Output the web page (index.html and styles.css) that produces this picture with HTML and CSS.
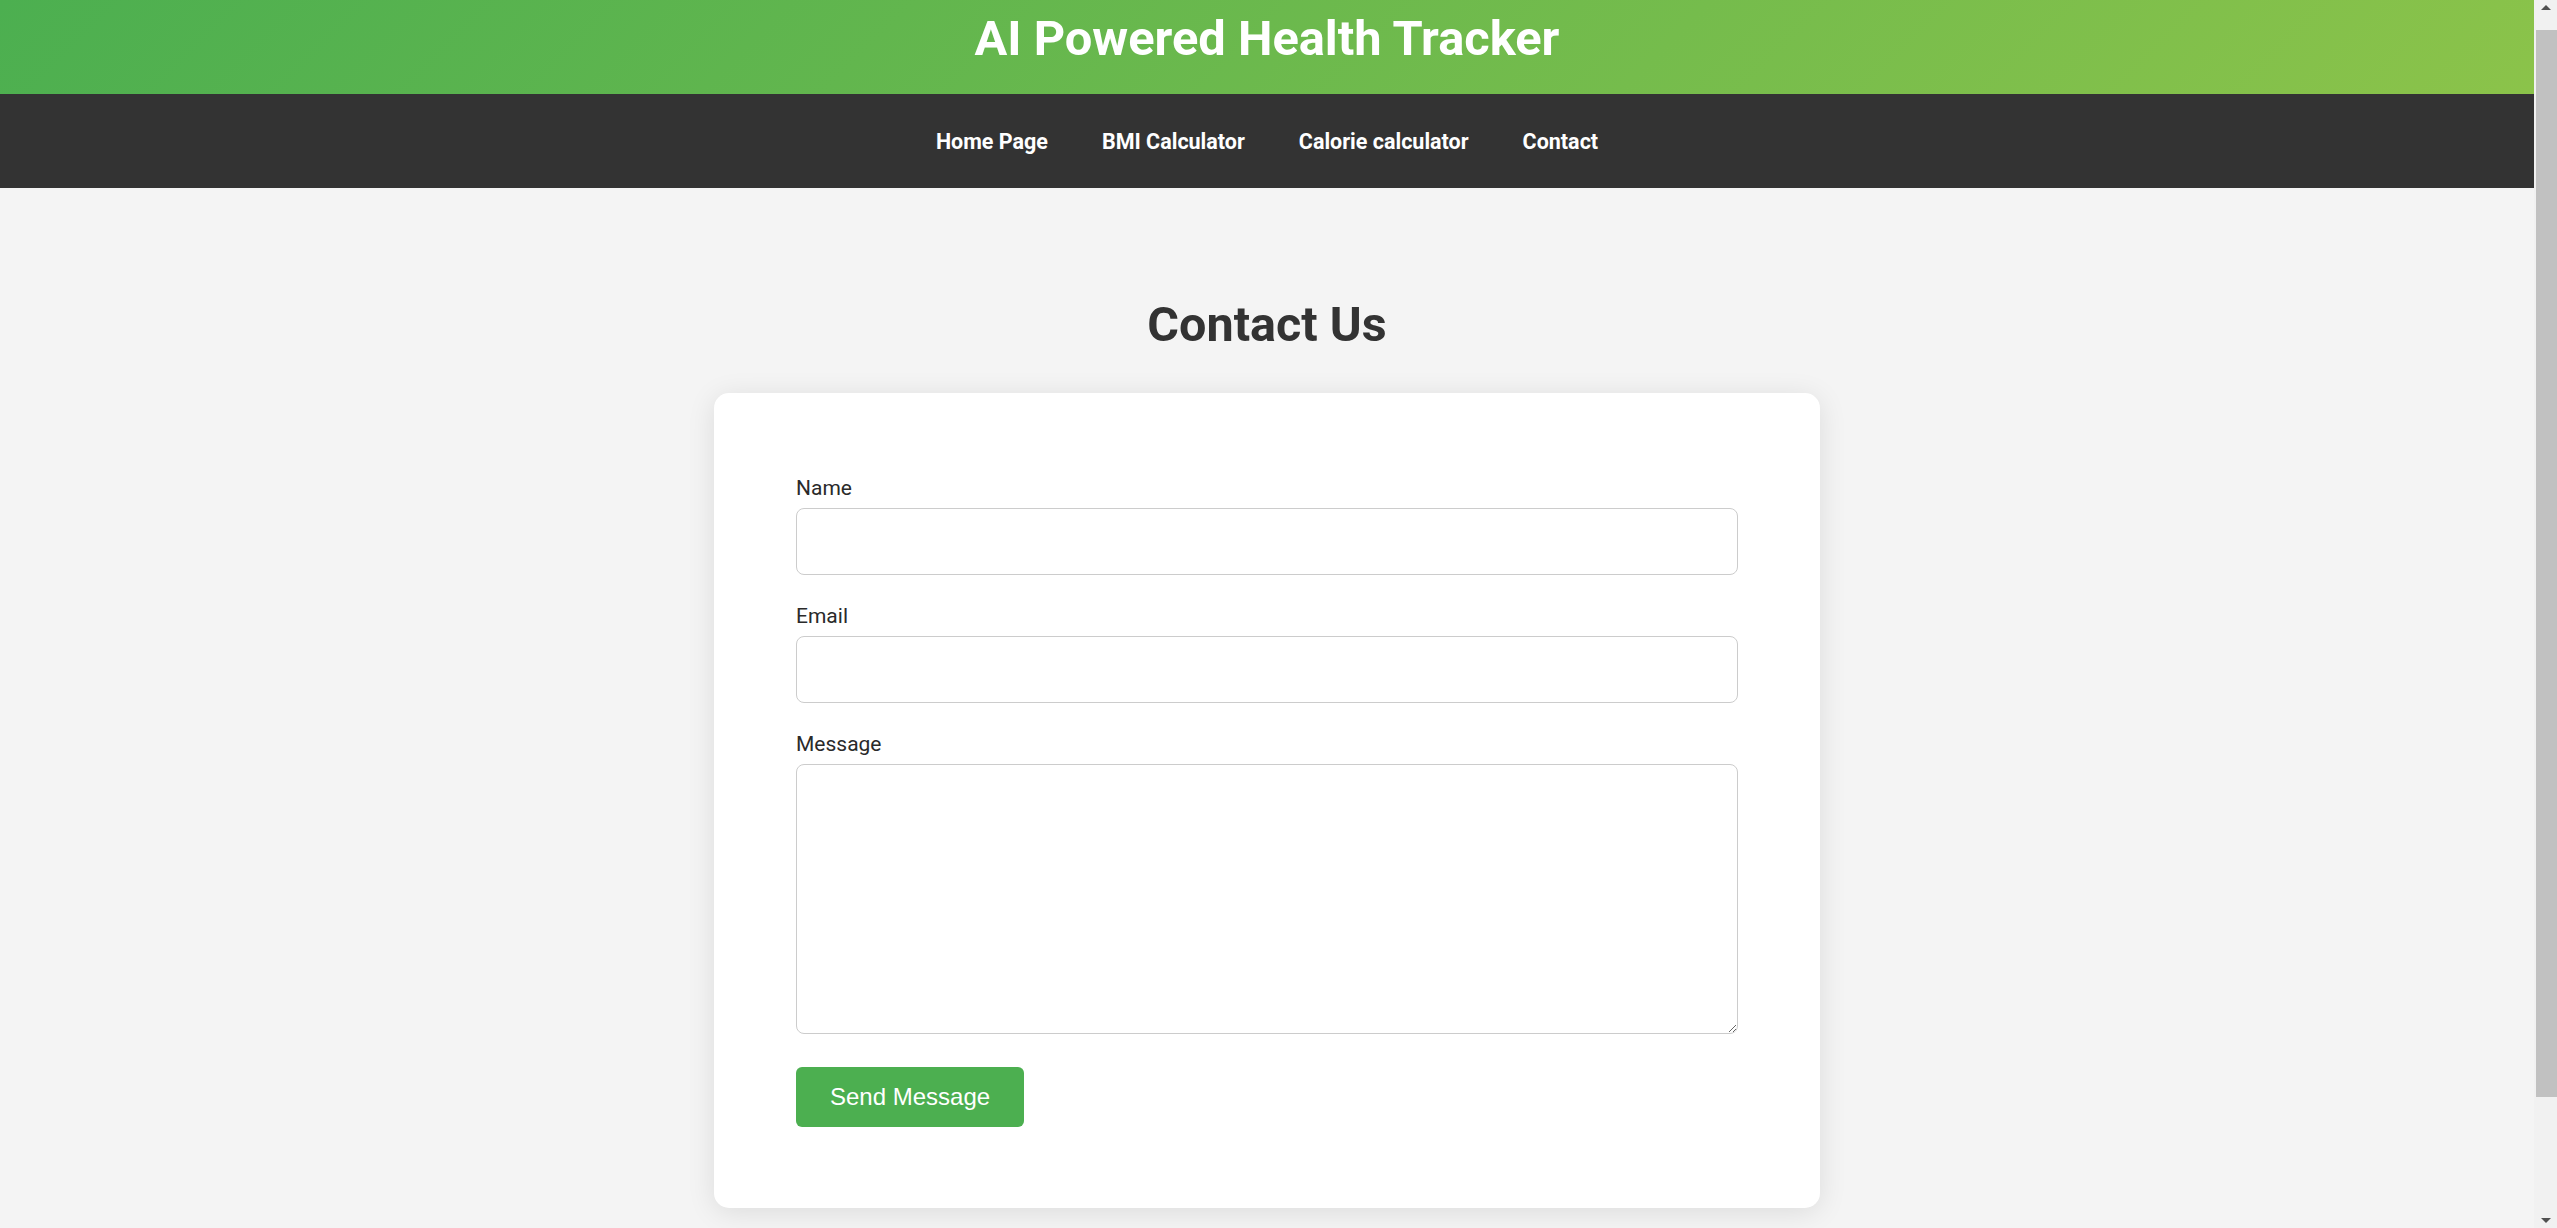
FILE: index.html
```html
<!DOCTYPE html>
<html lang="en">
<head>
<meta charset="utf-8">
<title>Contact Us - AI Powered Health Tracker</title>
<link rel="stylesheet" href="styles.css">
</head>
<body>
<div class="app">
  <header class="site-header">
    <h1 class="site-title">AI Powered Health Tracker</h1>
  </header>
  <nav class="site-nav">
    <a class="nav-link" href="#">Home Page</a>
    <a class="nav-link" href="#">BMI Calculator</a>
    <a class="nav-link" href="#">Calorie calculator</a>
    <a class="nav-link" href="#">Contact</a>
  </nav>
  <main class="page">
    <h2 class="page-title">Contact Us</h2>
    <form class="card">
      <div class="field">
        <label class="field-label" for="name">Name</label>
        <input class="field-input" id="name" type="text">
      </div>
      <div class="field">
        <label class="field-label" for="email">Email</label>
        <input class="field-input" id="email" type="email">
      </div>
      <div class="field">
        <label class="field-label" for="message">Message</label>
        <textarea class="field-input field-textarea" id="message"></textarea>
      </div>
      <button class="send-btn" type="button">Send Message</button>
    </form>
  </main>
</div>
<aside class="scrollbar" aria-hidden="true">
  <div class="sb-btn"><span class="sb-arrow sb-up"></span></div>
  <div class="sb-track"><div class="sb-thumb"></div></div>
  <div class="sb-btn"><span class="sb-arrow sb-down"></span></div>
</aside>
</body>
</html>
```
FILE: styles.css
```css
html {
  background: #f4f4f4;
  scrollbar-width: none;
}
html::-webkit-scrollbar {
  display: none;
}

body {
  margin: 0;
  font-family: Roboto, "Liberation Sans", Arial, sans-serif;
  color: #333;
  background: #f4f4f4;
  display: grid;
  grid-template-columns: minmax(0, 1fr) 23px;
  align-items: start;
}

.app {
  min-width: 0;
}

/* fake browser scrollbar */
.scrollbar {
  position: sticky;
  top: 0;
  height: 100vh;
  background: #f1f1f1;
  display: flex;
  flex-direction: column;
}
.sb-btn {
  height: 15px;
  display: flex;
  justify-content: center;
  align-items: center;
  padding-left: 1px;
}
.sb-arrow {
  width: 0;
  height: 0;
  border-left: 5.5px solid transparent;
  border-right: 5.5px solid transparent;
}
.sb-up {
  border-bottom: 5.5px solid #505050;
}
.sb-down {
  border-top: 5.5px solid #505050;
}
.sb-track {
  flex: 1;
  padding-top: 15px;
}
.sb-thumb {
  height: 1067px;
  margin-left: 2px;
  background: #c1c1c1;
}

.site-header {
  height: 94px;
  box-sizing: border-box;
  padding-top: 10.5px;
  background: linear-gradient(135deg, #4caf50, #8bc34a);
  text-align: center;
}
.site-title {
  margin: 0;
  font-size: 48.8px;
  line-height: 56px;
  font-weight: 700;
  color: #fff;
}

.site-nav {
  height: 94px;
  box-sizing: border-box;
  padding-top: 1px;
  background: #333;
  display: flex;
  justify-content: center;
  align-items: center;
  gap: 54px;
}
.nav-link {
  color: #fff;
  text-decoration: none;
  font-size: 21.5px;
  font-weight: 700;
  line-height: 26px;
}

.page {
  padding: 108.6px 0 162px;
}
.page-title {
  margin: 0 0 40.7px;
  text-align: center;
  font-size: 48.5px;
  line-height: 56px;
  font-weight: 700;
  color: #333;
}

.card {
  width: 1106px;
  box-sizing: border-box;
  margin: 0 auto;
  padding: 82.7px 82px 81px;
  background: #fff;
  border-radius: 15px;
  box-shadow: 0 4px 28px rgba(0, 0, 0, 0.1);
  display: flex;
  flex-direction: column;
}

.field {
  display: flex;
  flex-direction: column;
  margin-bottom: 28.8px;
}
.field:last-of-type {
  margin-bottom: 32.7px;
}
.field-label {
  font-size: 21px;
  line-height: 25px;
  color: #2a2a2a;
  margin-bottom: 7.3px;
}
.field-input {
  display: block;
  width: 100%;
  height: 67px;
  box-sizing: border-box;
  border: 1.5px solid #ccc;
  border-radius: 8px;
  background: #fff;
  font-family: Roboto, sans-serif;
  font-size: 21px;
  padding: 12px;
  margin: 0;
}
.field-textarea {
  height: 270px;
  resize: vertical;
}

.send-btn {
  align-self: flex-start;
  border: none;
  border-radius: 6px;
  background: #4caf50;
  color: #fff;
  font-family: "Liberation Sans", Arial, sans-serif;
  font-size: 24px;
  line-height: 27.6px;
  padding: 16.2px 34px;
  margin: 0;
  cursor: pointer;
}
```
